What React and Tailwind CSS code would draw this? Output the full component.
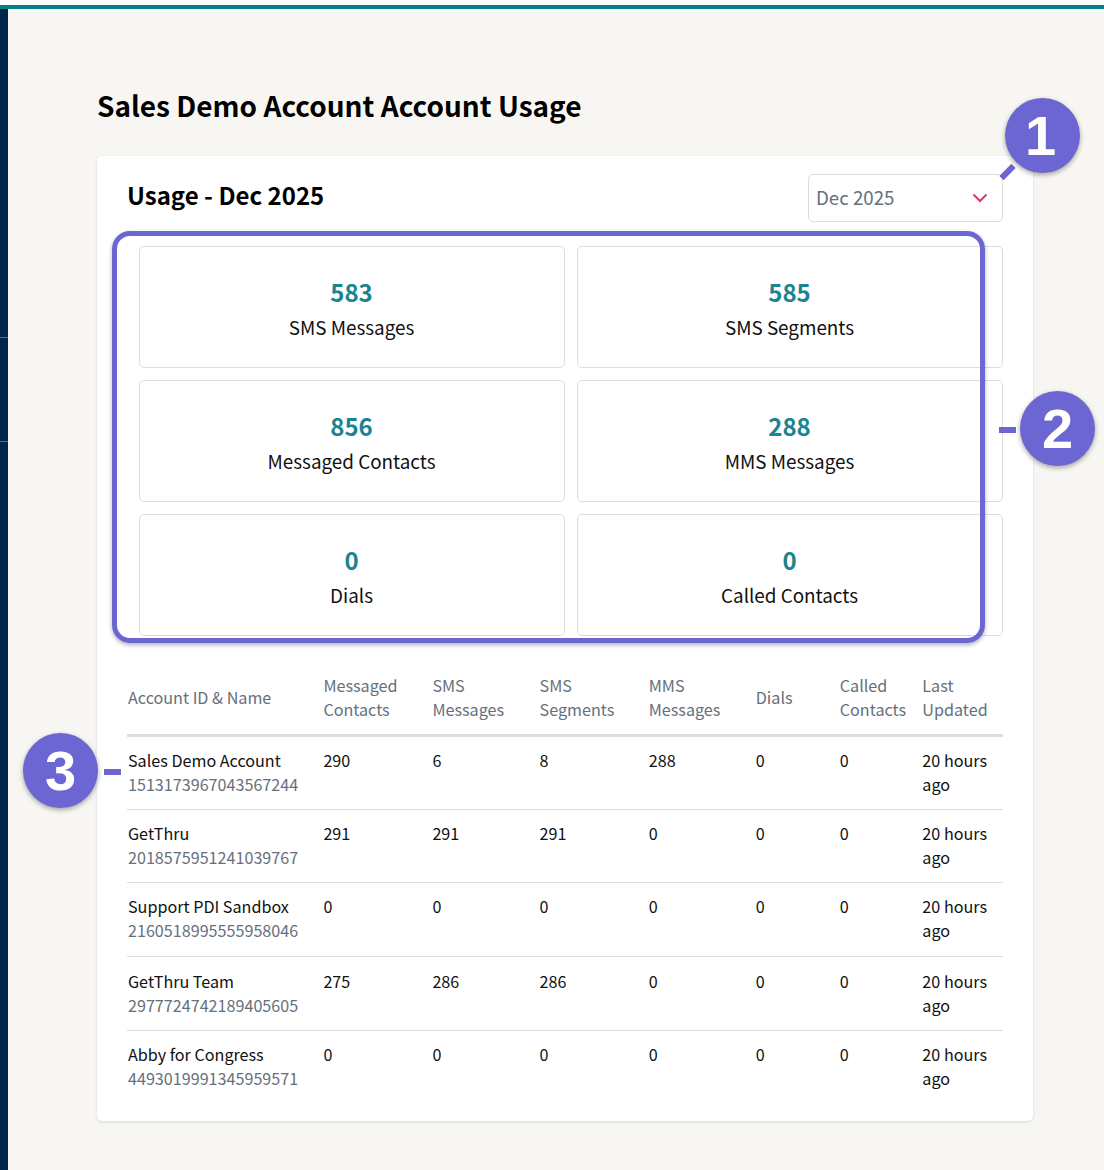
import React from 'react';

const stats = [
    { value: '583', label: 'SMS Messages' },
    { value: '585', label: 'SMS Segments' },
    { value: '856', label: 'Messaged Contacts' },
    { value: '288', label: 'MMS Messages' },
    { value: '0', label: 'Dials' },
    { value: '0', label: 'Called Contacts' },
];

const columns = [
    { title: ['Messaged', 'Contacts'] },
    { title: ['SMS', 'Messages'] },
    { title: ['SMS', 'Segments'] },
    { title: ['MMS', 'Messages'] },
    { title: ['Dials'] },
    { title: ['Called', 'Contacts'] },
    { title: ['Last', 'Updated'] },
];

const rows = [
    { name: 'Sales Demo Account', id: '1513173967043567244', values: [290, 6, 8, 288, 0, 0], cls: 'h-[74px]', pad: 'pt-[11px]' },
    { name: 'GetThru', id: '2018575951241039767', values: [291, 291, 291, 0, 0, 0], cls: 'h-[73px]', pad: 'pt-[11px]' },
    { name: 'Support PDI Sandbox', id: '2160518995555958046', values: [0, 0, 0, 0, 0, 0], cls: 'h-[74px]', pad: 'pt-[11px]' },
    { name: 'GetThru Team', id: '2977724742189405605', values: [275, 286, 286, 0, 0, 0], cls: 'h-[74px]', pad: 'pt-[12px]' },
    { name: 'Abby for Congress', id: '4493019991345959571', values: [0, 0, 0, 0, 0, 0], cls: 'h-[73px]', pad: 'pt-[11px]' },
];

const Badge = ({ n, className }) => (
    <div className={`absolute w-[75px] h-[75px] rounded-full bg-[#6b66d1] text-white flex items-center justify-center text-[56px] font-bold font-['Liberation_Sans',sans-serif] shadow-[0_2px_5px_rgba(0,0,0,0.35)] ${className}`}>
        {n}
    </div>
);

const StatCard = ({ value, label }) => (
    <div className="h-[122px] rounded-[5px] border border-[#dddddd] bg-white flex flex-col items-center pt-[26px] pr-px">
        <div className="text-[24px] leading-[38px] font-bold text-[#1a8590]">{value}</div>
        <div className="text-[18.85px] leading-[32px] text-[#111111]">{label}</div>
    </div>
);

export default function App() {
    return (
        <div className="relative h-[1170px] w-[1104px] overflow-hidden bg-white font-['Noto_Sans_CJK_JP','Noto_Sans',sans-serif]">
            <div className="mt-[5px] h-[4px] bg-[#05808a]" />
            <div className="flex h-[1161px]">
                <div className="w-[8px] bg-[#00264a] flex flex-col">
                    <div className="mt-[328px] h-px bg-[#5a6d84]" />
                    <div className="mt-[103px] h-px bg-[#5a6d84]" />
                </div>
                <div className="flex-1 bg-[#f7f6f3] pl-[89px] pr-[71px]">
                    <h1 className="mt-[74px] h-[49px] text-[28px] leading-[44px] font-bold text-black">Sales Demo Account Account Usage</h1>
                    <div className="mt-[24px] h-[965px] rounded-[5px] bg-white px-[30px] shadow-[0_1px_3px_rgba(0,0,0,0.12)]">
                        <div className="flex justify-between h-[90px] pt-[18px]">
                            <h2 className="mt-[2px] text-[24px] leading-[38px] font-bold text-black">Usage - Dec 2025</h2>
                            <div className="w-[195px] h-[48px] rounded-[5px] border border-[#dddddd] flex items-center justify-between pl-[7px] pr-[14px]">
                                <span className="mb-[2px] text-[18.7px] text-[#66707c]">Dec 2025</span>
                                <svg width="16" height="10" viewBox="0 0 16 10" fill="none" stroke="#e0365f" strokeWidth="2"><path d="M1.5 1.5 8 8l6.5-6.5" /></svg>
                            </div>
                        </div>
                        <div className="ml-[12px] grid grid-cols-2 gap-x-[12px] gap-y-[12px]">
                            {stats.map(s => <StatCard key={s.label} {...s} />)}
                        </div>
                        <table className="mt-[37px] w-[876px] table-fixed border-collapse text-[16.15px] leading-[24px]">
                            <colgroup>
                                <col className="w-[196.4px]" />
                                <col className="w-[109px]" />
                                <col className="w-[107.2px]" />
                                <col className="w-[109.2px]" />
                                <col className="w-[107px]" />
                                <col className="w-[84px]" />
                                <col className="w-[82.6px]" />
                                <col className="w-[80.6px]" />
                            </colgroup>
                            <thead>
                                <tr className="h-[60px] border-b-[3px] border-[#dddddd] text-[#66707c]">
                                    <th className="pl-px pb-[13px] font-normal text-left align-middle">Account ID &amp; Name</th>
                                    {columns.map(c => (
                                        <th key={c.title.join(' ')} className="pb-[13px] font-normal text-left align-middle">
                                            {c.title.map(t => <div key={t}>{t}</div>)}
                                        </th>
                                    ))}
                                </tr>
                            </thead>
                            <tbody>
                                {rows.map((r, i) => (
                                    <tr key={r.id} className={`${r.cls} align-top ${i < rows.length - 1 ? 'border-b border-[#dddddd]' : ''} text-[#111111]`}>
                                        <td className={`pl-px ${r.pad}`}>
                                            <div>{r.name}</div>
                                            <div className="text-[#66707c]">{r.id}</div>
                                        </td>
                                        {r.values.map((v, j) => <td key={j} className={r.pad}>{v}</td>)}
                                        <td className={r.pad}>20 hours ago</td>
                                    </tr>
                                ))}
                            </tbody>
                        </table>
                    </div>
                </div>
            </div>

            {/* annotations on top of the screenshot */}
            <div className="absolute left-[112px] top-[231px] w-[873px] h-[412px] rounded-[18px] border-[5px] border-[#6b66d1] shadow-[0_2px_4px_rgba(0,0,0,0.3)]" />
            <div className="absolute left-[999px] top-[169px] w-[17px] h-[6px] bg-[#6b66d1] -rotate-45" />
            <div className="absolute left-[999px] top-[427px] w-[17px] h-[6px] bg-[#6b66d1]" />
            <div className="absolute left-[104px] top-[769px] w-[17px] h-[6px] bg-[#6b66d1]" />
            <Badge n="1" className="left-[1005px] top-[98px] pr-[4px]" />
            <Badge n="2" className="left-[1020px] top-[391px]" />
            <Badge n="3" className="left-[23px] top-[733px]" />
        </div>
    );
}
